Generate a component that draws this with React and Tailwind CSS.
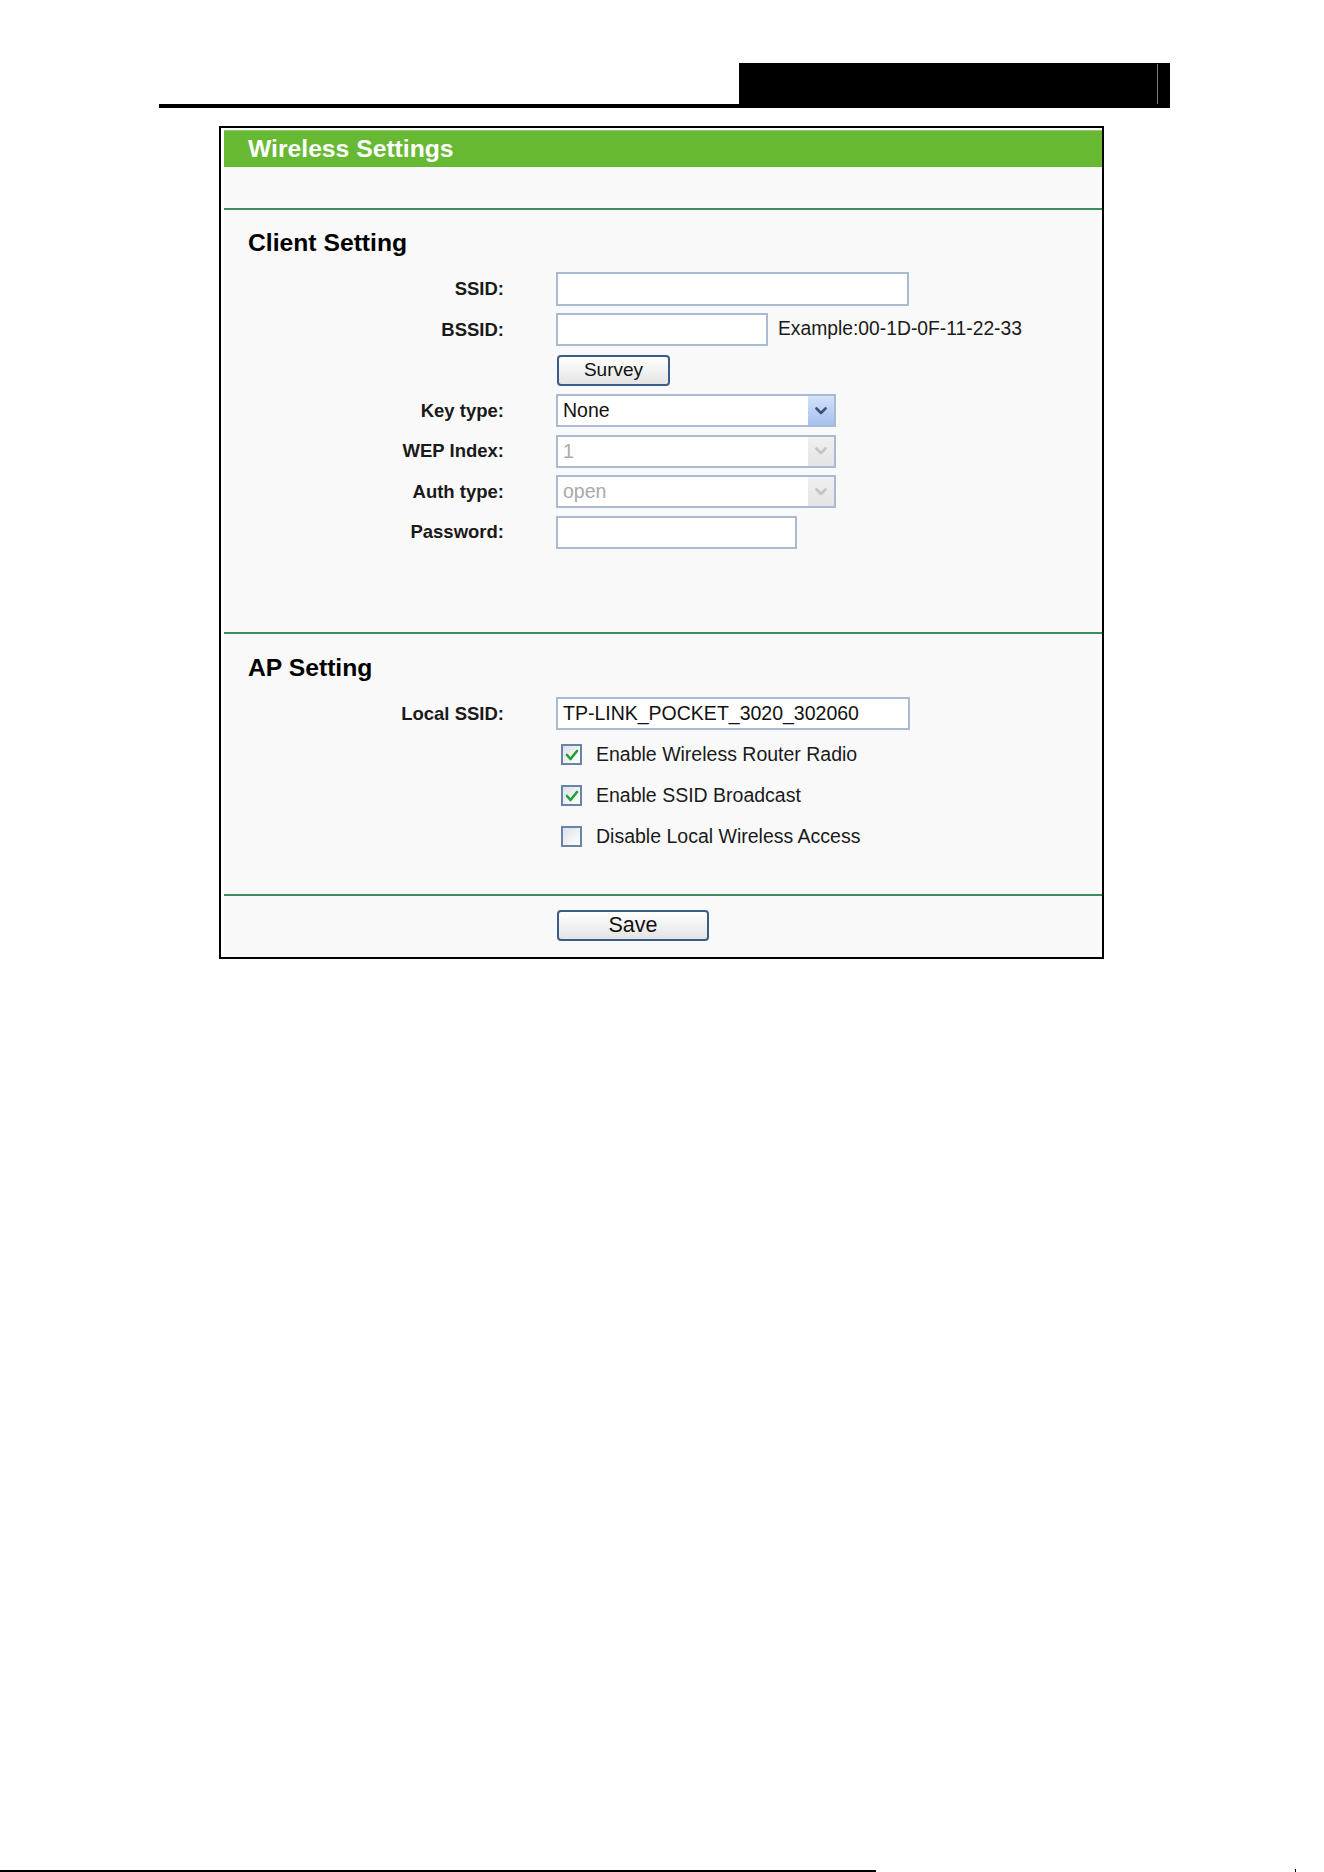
import React from 'react';

const Chevron = ({ color }) => (
  <svg width="12" height="8" viewBox="0 0 12 8">
    <polyline points="1.5,1.5 6,6 10.5,1.5" fill="none" stroke={color} strokeWidth="2.6" strokeLinecap="round" strokeLinejoin="round" />
  </svg>
);

const Check = () => (
  <svg width="14" height="12" viewBox="0 0 14 12">
    <polyline points="2,6 5.5,10 12,2" fill="none" stroke="#1fa233" strokeWidth="2.6" strokeLinecap="round" strokeLinejoin="round" />
  </svg>
);

const Row = ({ label, h = 'h-[40.5px]', children }) => (
  <div className={`grid grid-cols-[280px_1fr] gap-x-[52px] items-center ${h}`}>
    <div className="text-right text-[18.5px] font-bold text-[#1a1a1a]">{label}</div>
    <div className="flex items-center">{children}</div>
  </div>
);

const TextBox = ({ width, height = 'h-[33px]', value }) => (
  <div className={`${width} ${height} border-2 border-[#a9bbd1] bg-white pl-[5px] flex items-center text-[19.5px] text-[#111]`}>
    {value}
  </div>
);

const Select = ({ value, disabled }) => (
  <div className="w-[280px] h-[33px] border-2 border-[#a9bbd1] bg-white flex items-stretch">
    <div className={`flex-1 pl-[5px] flex items-center text-[19.5px] ${disabled ? 'text-[#a9a9a9]' : 'text-[#111]'}`}>
      {value}
    </div>
    <div
      className={`w-[26px] flex items-center justify-center ${
        disabled ? 'bg-gradient-to-b from-[#f0f0f0] to-[#e4e4e4]' : 'bg-gradient-to-b from-[#d3e2fb] to-[#a6c0ee]'
      }`}
    >
      <Chevron color={disabled ? '#c4c4c4' : '#3f5173'} />
    </div>
  </div>
);

const Button = ({ label, width, text = 'text-[19px]' }) => (
  <div className={`${width} h-[31px] border-2 border-[#3b5c88] rounded-[4px] bg-gradient-to-b from-white to-[#e4e4e4] flex items-center justify-center ${text} text-[#111]`}>
    {label}
  </div>
);

const CheckBox = ({ checked, label }) => (
  <div className="flex items-center ml-[5px]">
    <div className="w-[21px] h-[21px] border-2 border-[#6a84a8] bg-gradient-to-br from-[#dde1e6] to-white flex items-center justify-center">
      {checked && <Check />}
    </div>
    <span className="ml-[14px] text-[19.5px] text-[#1a1a1a]">{label}</span>
  </div>
);

const Heading = ({ children }) => (
  <div className="pl-[24px] h-[28px] leading-[28px] text-[24.7px] font-bold text-black">{children}</div>
);

export default function App() {
  return (
    <div className="w-[1324px] h-[1872px] bg-white font-['Liberation_Sans',Arial,sans-serif]">
      {/* page header bar */}
      <div className="pt-[63px] ml-[159px] w-[1011px]">
        <div className="h-[41px] flex justify-end">
          <div className="w-[431px] h-full bg-black flex justify-end items-start pt-[1px] pr-[12px]">
            <div className="w-[1px] h-[40px] bg-[#7a7a7a]"></div>
          </div>
        </div>
        <div className="h-[4px] bg-black"></div>
      </div>

      {/* settings panel */}
      <div className="ml-[219px] mt-[18px] w-[885px] h-[833px] border-2 border-black bg-white pl-[3px] pt-[2px]">
        <div className="h-full bg-[#f9f9f9] flex flex-col">
          <div className="h-[37px] bg-[#67b934] border-t border-[#8fcd6c] pl-[24px] leading-[35px] text-[24.7px] font-bold text-white">
            Wireless Settings
          </div>
          <div className="h-[41px]"></div>
          <div className="h-[2px] bg-[#3e8d5d]"></div>

          {/* Client Setting */}
          <div className="h-[422px] pt-[19px]">
            <Heading>Client Setting</Heading>
            <div className="mt-[12px]">
              <Row label="SSID:">
                <TextBox width="w-[353px]" height="h-[34px]" />
              </Row>
              <Row label="BSSID:">
                <TextBox width="w-[212px]" />
                <span className="ml-[10px] text-[19.3px] text-[#1a1a1a]">Example:00-1D-0F-11-22-33</span>
              </Row>
              <Row label="">
                <div className="ml-[1px]">
                  <Button label="Survey" width="w-[113px]" />
                </div>
              </Row>
              <Row label="Key type:">
                <Select value="None" />
              </Row>
              <Row label="WEP Index:">
                <Select value="1" disabled />
              </Row>
              <Row label="Auth type:">
                <Select value="open" disabled />
              </Row>
              <Row label="Password:">
                <TextBox width="w-[241px]" />
              </Row>
            </div>
          </div>
          <div className="h-[2px] bg-[#3e8d5d]"></div>

          {/* AP Setting */}
          <div className="h-[260px] pt-[20px]">
            <Heading>AP Setting</Heading>
            <div className="mt-[11px]">
              <Row label="Local SSID:" h="h-[41px]">
                <TextBox width="w-[354px]" value="TP-LINK_POCKET_3020_302060" />
              </Row>
              <Row label="" h="h-[41px]">
                <CheckBox checked label="Enable Wireless Router Radio" />
              </Row>
              <Row label="" h="h-[41px]">
                <CheckBox checked label="Enable SSID Broadcast" />
              </Row>
              <Row label="" h="h-[41px]">
                <CheckBox label="Disable Local Wireless Access" />
              </Row>
            </div>
          </div>
          <div className="h-[2px] bg-[#3e8d5d]"></div>

          <div className="flex-1 pt-[14px] pl-[333px]">
            <Button label="Save" width="w-[152px]" text="text-[21.5px]" />
          </div>
        </div>
      </div>

      {/* page footer rule */}
      <div className="mt-[910px] flex items-end">
        <div className="w-[876px] h-[2px] bg-black"></div>
        <div className="ml-[419px] w-[1px] h-[3px] bg-black"></div>
      </div>
    </div>
  );
}
